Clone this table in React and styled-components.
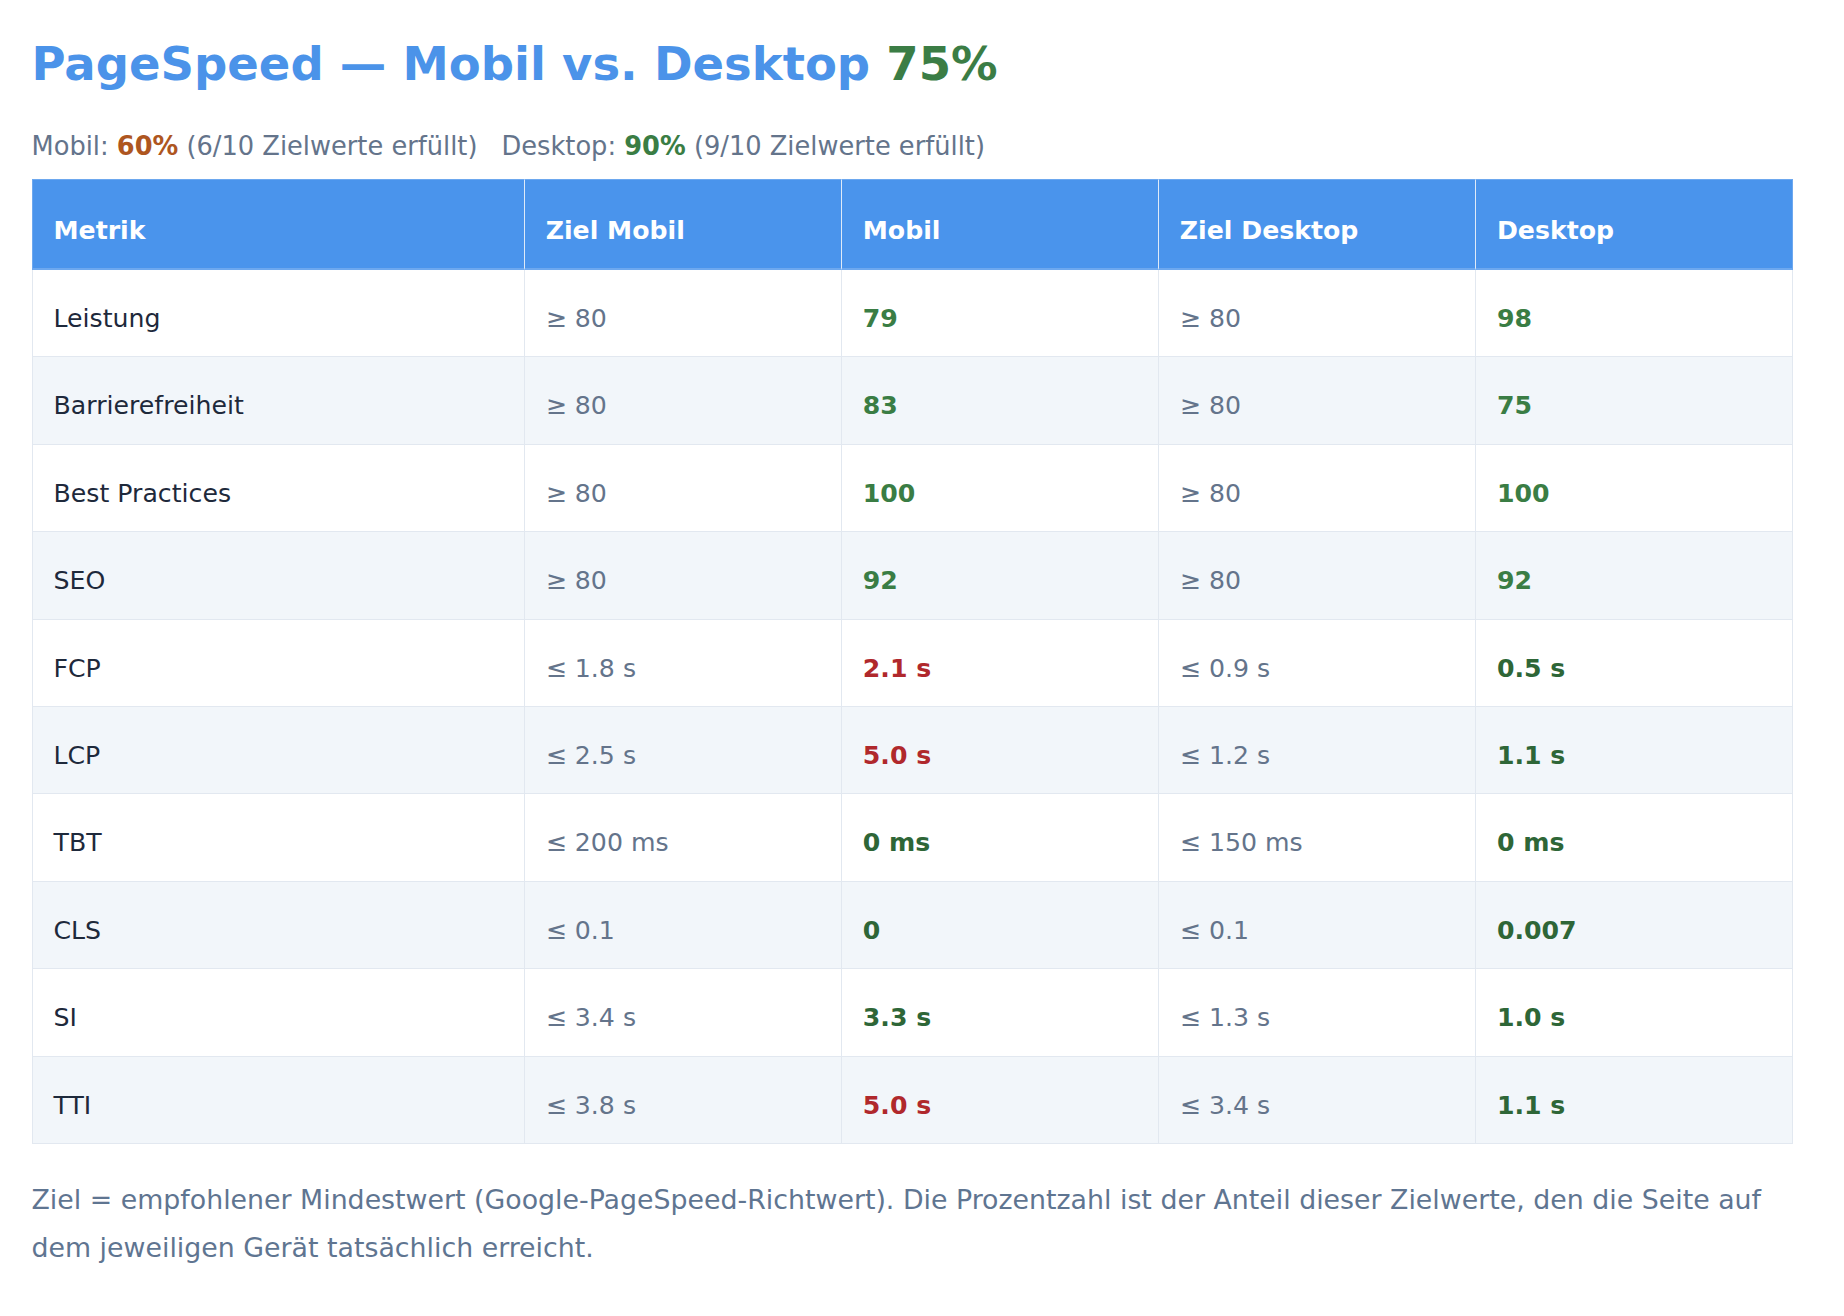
import React from 'react'
import styled, { createGlobalStyle } from 'styled-components'

const GlobalStyle = createGlobalStyle`
  html, body {
    margin: 0;
    padding: 0;
    background: #ffffff;
  }
  body {
    font-family: "DejaVu Sans", "Noto Sans", sans-serif;
  }
`

const rows = [
  { metric: 'Leistung', goalM: '≥ 80', mobil: '79', tm: 'score', goalD: '≥ 80', desk: '98', td: 'score' },
  { metric: 'Barrierefreiheit', goalM: '≥ 80', mobil: '83', tm: 'score', goalD: '≥ 80', desk: '75', td: 'score' },
  { metric: 'Best Practices', goalM: '≥ 80', mobil: '100', tm: 'score', goalD: '≥ 80', desk: '100', td: 'score' },
  { metric: 'SEO', goalM: '≥ 80', mobil: '92', tm: 'score', goalD: '≥ 80', desk: '92', td: 'score' },
  { metric: 'FCP', goalM: '≤ 1.8 s', mobil: '2.1 s', tm: 'bad', goalD: '≤ 0.9 s', desk: '0.5 s', td: 'good' },
  { metric: 'LCP', goalM: '≤ 2.5 s', mobil: '5.0 s', tm: 'bad', goalD: '≤ 1.2 s', desk: '1.1 s', td: 'good' },
  { metric: 'TBT', goalM: '≤ 200 ms', mobil: '0 ms', tm: 'good', goalD: '≤ 150 ms', desk: '0 ms', td: 'good' },
  { metric: 'CLS', goalM: '≤ 0.1', mobil: '0', tm: 'good', goalD: '≤ 0.1', desk: '0.007', td: 'good' },
  { metric: 'SI', goalM: '≤ 3.4 s', mobil: '3.3 s', tm: 'good', goalD: '≤ 1.3 s', desk: '1.0 s', td: 'good' },
  { metric: 'TTI', goalM: '≤ 3.8 s', mobil: '5.0 s', tm: 'bad', goalD: '≤ 3.4 s', desk: '1.1 s', td: 'good' },
]

const toneColor = {
  score: '#3a7d44',
  good: '#2e6637',
  bad: '#b0282c',
  warn: '#ae561f',
}

function App() {
  return (
    <>
      <GlobalStyle />
      <Page>
        <Title>
          PageSpeed — Mobil vs. Desktop <Accent>75%</Accent>
        </Title>
        <Summary>
          Mobil: <Strong tone="warn">60%</Strong> (6/10 Zielwerte erfüllt)
          <Gap />
          Desktop: <Strong tone="score">90%</Strong> (9/10 Zielwerte erfüllt)
        </Summary>

        <Table>
          <colgroup>
            <col style={{ width: '28%' }} />
            <col style={{ width: '18%' }} />
            <col style={{ width: '18%' }} />
            <col style={{ width: '18%' }} />
            <col style={{ width: '18%' }} />
          </colgroup>
          <thead>
            <tr>
              <Th>Metrik</Th>
              <Th>Ziel Mobil</Th>
              <Th>Mobil</Th>
              <Th>Ziel Desktop</Th>
              <Th>Desktop</Th>
            </tr>
          </thead>
          <tbody>
            {rows.map((r) => (
              <Row key={r.metric}>
                <Td>{r.metric}</Td>
                <Td muted>{r.goalM}</Td>
                <Td><Value tone={r.tm}>{r.mobil}</Value></Td>
                <Td muted>{r.goalD}</Td>
                <Td><Value tone={r.td}>{r.desk}</Value></Td>
              </Row>
            ))}
          </tbody>
        </Table>

        <Note>
          Ziel = empfohlener Mindestwert (Google-PageSpeed-Richtwert). Die Prozentzahl ist der Anteil dieser Zielwerte, den die Seite auf dem jeweiligen Gerät tatsächlich erreicht.
        </Note>
      </Page>
    </>
  )
}

const Page = styled.div`
  width: 1761.5px;
  padding: 37px 0 40px 31.5px;
`

const Title = styled.h1`
  margin: 0;
  font-size: 46.5px;
  font-weight: 700;
  line-height: normal;
  color: #4b93e9;
`

const Accent = styled.span`
  color: #3b7d45;
`

const Summary = styled.p`
  margin: 40px 0 18px;
  font-size: 25.7px;
  line-height: 30px;
  color: #64748b;
`

const Strong = styled.b`
  color: ${(p) => toneColor[p.tone]};
`

const Gap = styled.span`
  display: inline-block;
  width: 24px;
`

const Table = styled.table`
  width: 100%;
  table-layout: fixed;
  border-collapse: separate;
  border-spacing: 0;
  font-size: 25.2px;
`

const Th = styled.th`
  text-align: left;
  font-weight: 700;
  color: #ffffff;
  background: #4a94ec;
  line-height: 29px;
  padding: 36px 21px 23px;
  border-top: 1px solid #6da8ef;
  border-bottom: 2px solid #6da8ef;
  border-right: 1px solid #dfeaf8;

  &:first-child {
    border-left: 1px solid #6da8ef;
  }
  &:last-child {
    border-right-color: #6da8ef;
  }
`

const Row = styled.tr`
  background: #ffffff;
  &:nth-child(even) {
    background: #f2f6fa;
  }
`

const Td = styled.td`
  line-height: 28px;
  padding: 35px 21px 23.4px;
  color: ${(p) => (p.muted ? '#64748b' : '#1e293b')};
  border-right: 1px solid #e2e8f0;
  border-bottom: 1px solid #e2e8f0;

  &:first-child {
    border-left: 1px solid #e2e8f0;
  }
`

const Value = styled.span`
  font-weight: 700;
  color: ${(p) => toneColor[p.tone]};
`

const Note = styled.p`
  margin: 32px 0 0;
  font-size: 26.8px;
  line-height: 47.6px;
  color: #5f7591;
`

export default App
